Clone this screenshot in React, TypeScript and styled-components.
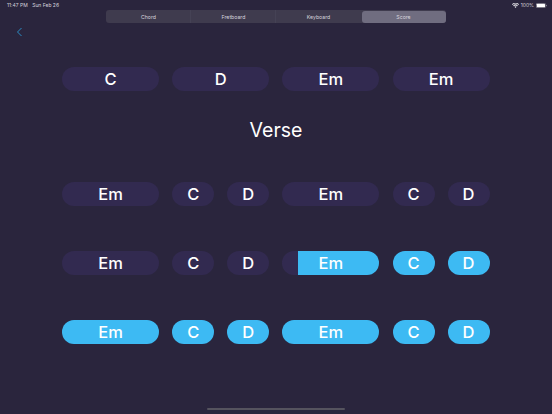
import styled, { createGlobalStyle } from "styled-components";

const GlobalStyle = createGlobalStyle`
	html, body {
		margin: 0;
		padding: 0;
		background: #2a253d;
	}
	body {
		font-family: Inter, "Liberation Sans", sans-serif;
	}
`;

const Page = styled.div`
	width: 552px;
	height: 414px;
	overflow: hidden;
	display: flex;
	flex-direction: column;
	background: #2a253d;
`;

const Header = styled.header`
	display: grid;
	grid-template-columns: 106px 340px 106px;
	height: 24px;
`;

const StatusText = styled.span`
	font-size: 5px;
	line-height: 10px;
	color: #d5d3dc;
`;

const StatusLeft = styled.div`
	display: flex;
	gap: 4.5px;
	padding-left: 7px;
	white-space: nowrap;
`;

const StatusRight = styled.div`
	display: flex;
	align-items: flex-start;
	justify-content: flex-end;
	gap: 2px;
	padding-right: 5px;
	height: 10px;
	svg {
		display: block;
		margin-top: 2.5px;
	}
`;

const Tabs = styled.nav`
	display: grid;
	grid-template-columns: repeat(4, 1fr);
	height: 13px;
	margin-top: 10px;
	border-radius: 3px;
	background: #3f3b4e;
`;

const Tab = styled.div<{ $active?: boolean; $divider?: boolean }>`
	display: flex;
	align-items: center;
	justify-content: center;
	font-size: 5.2px;
	color: #d8d6de;
	border-radius: ${(props) => (props.$active ? "3px" : "0")};
	margin: ${(props) => (props.$active ? "0.5px" : "0")};
	background: ${(props) => (props.$active ? "#706d80" : "transparent")};
	box-shadow: ${(props) => (props.$divider ? "inset -1px 0 0 -0.5px #4d4a5c" : "none")};
`;

const BackButton = styled.div`
	height: 14px;
	padding: 2.5px 0 0 16px;
	svg {
		display: block;
	}
`;

const Score = styled.main`
	display: flex;
	flex-direction: column;
	padding: 0 62px;
	margin-top: 26.5px;
`;

const Row = styled.div<{ $gap?: number }>`
	display: grid;
	grid-template-columns: repeat(4, 97px);
	column-gap: 13.2px;
	margin-bottom: ${(props) => props.$gap ?? 45.2}px;
`;

const Section = styled.h2`
	margin: 0 0 35.5px;
	height: 31px;
	line-height: 31px;
	font-size: 19.5px;
	font-weight: 400;
	text-align: center;
	color: #fff;
`;

const Pair = styled.div`
	display: grid;
	grid-template-columns: 42px 42px;
	justify-content: space-between;
`;

const Chord = styled.div<{ $on?: boolean; $progress?: number }>`
	height: 24px;
	border-radius: 12px;
	display: flex;
	align-items: center;
	justify-content: center;
	font-size: 16.5px;
	font-weight: 500;
	color: #fff;
	background: ${(props) =>
		props.$progress !== undefined
			? `linear-gradient(to right, #322a50 ${props.$progress}%, #3dbaf3 ${props.$progress}%)`
			: props.$on
				? "#3dbaf3"
				: "#322a50"};
`;

const HomeBar = styled.div`
	width: 138px;
	height: 2px;
	margin: auto auto 4px;
	border-radius: 1px;
	background: #55535e;
`;

const Wifi = () => (
	<svg width="7" height="5" viewBox="0 0 14 10" fill="#e4e3e8">
		<path d="M7 10 4.8 7.6a3.2 3.2 0 0 1 4.4 0L7 10Z" />
		<path d="M3.7 6.4 2.3 4.9a6.9 6.9 0 0 1 9.4 0l-1.4 1.5a4.9 4.9 0 0 0-6.6 0Z" />
		<path d="M1.2 3.8 0 2.5a10.3 10.3 0 0 1 14 0l-1.2 1.3a8.5 8.5 0 0 0-11.6 0Z" />
	</svg>
);

const Battery = () => (
	<svg width="11" height="5" viewBox="0 0 22 10">
		<rect x="0.5" y="0.5" width="18.5" height="9" rx="2" fill="none" stroke="#9c9aa5" />
		<rect x="1.5" y="1.5" width="16.5" height="7" rx="1.2" fill="#fff" />
		<rect x="20" y="3.5" width="1.5" height="3" rx="0.7" fill="#9c9aa5" />
	</svg>
);

const Back = () => (
	<svg width="7" height="10" viewBox="0 0 7 10" fill="none">
		<path d="M5.5 1 1.5 5l4 4" stroke="#2b8cc4" strokeWidth="1" />
	</svg>
);

function Split({ on }: { on?: boolean }) {
	return (
		<Pair>
			<Chord $on={on}>C</Chord>
			<Chord $on={on}>D</Chord>
		</Pair>
	);
}

export default function App() {
	return (
		<Page>
			<GlobalStyle />
			<Header>
				<StatusLeft>
					<StatusText>11:47 PM</StatusText>
					<StatusText>Sun Feb 26</StatusText>
				</StatusLeft>
				<Tabs>
					<Tab $divider>Chord</Tab>
					<Tab $divider>Fretboard</Tab>
					<Tab>Keyboard</Tab>
					<Tab $active>Score</Tab>
				</Tabs>
				<StatusRight>
					<Wifi />
					<StatusText>100%</StatusText>
					<Battery />
				</StatusRight>
			</Header>
			<BackButton>
				<Back />
			</BackButton>
			<Score>
				<Row $gap={24}>
					<Chord>C</Chord>
					<Chord>D</Chord>
					<Chord>Em</Chord>
					<Chord>Em</Chord>
				</Row>
				<Section>Verse</Section>
				<Row>
					<Chord>Em</Chord>
					<Split />
					<Chord>Em</Chord>
					<Split />
				</Row>
				<Row>
					<Chord>Em</Chord>
					<Split />
					<Chord $progress={17}>Em</Chord>
					<Split on />
				</Row>
				<Row $gap={0}>
					<Chord $on>Em</Chord>
					<Split on />
					<Chord $on>Em</Chord>
					<Split on />
				</Row>
			</Score>
			<HomeBar />
		</Page>
	);
}
